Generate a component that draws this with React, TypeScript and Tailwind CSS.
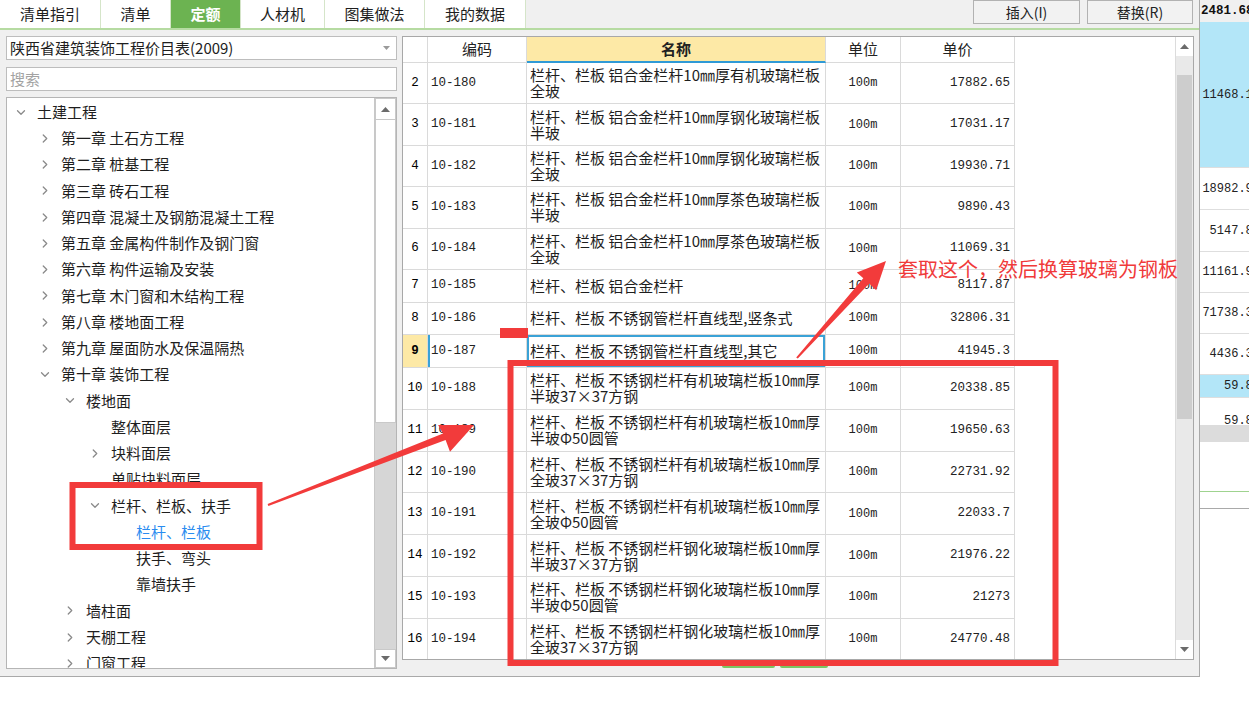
import { ChevronDown, ChevronRight } from 'lucide-react';

type TreeNode = { t: string; lvl: number; chev?: 'down' | 'right'; sel?: boolean };

const tree: TreeNode[] = [
  { t: '土建工程', lvl: 0, chev: 'down' },
  { t: '第一章 土石方工程', lvl: 1, chev: 'right' },
  { t: '第二章 桩基工程', lvl: 1, chev: 'right' },
  { t: '第三章 砖石工程', lvl: 1, chev: 'right' },
  { t: '第四章 混凝土及钢筋混凝土工程', lvl: 1, chev: 'right' },
  { t: '第五章 金属构件制作及钢门窗', lvl: 1, chev: 'right' },
  { t: '第六章 构件运输及安装', lvl: 1, chev: 'right' },
  { t: '第七章 木门窗和木结构工程', lvl: 1, chev: 'right' },
  { t: '第八章 楼地面工程', lvl: 1, chev: 'right' },
  { t: '第九章 屋面防水及保温隔热', lvl: 1, chev: 'right' },
  { t: '第十章 装饰工程', lvl: 1, chev: 'down' },
  { t: '楼地面', lvl: 2, chev: 'down' },
  { t: '整体面层', lvl: 3 },
  { t: '块料面层', lvl: 3, chev: 'right' },
  { t: '单贴块料面层', lvl: 3 },
  { t: '栏杆、栏板、扶手', lvl: 3, chev: 'down' },
  { t: '栏杆、栏板', lvl: 4, sel: true },
  { t: '扶手、弯头', lvl: 4 },
  { t: '靠墙扶手', lvl: 4 },
  { t: '墙柱面', lvl: 2, chev: 'right' },
  { t: '天棚工程', lvl: 2, chev: 'right' },
  { t: '门窗工程', lvl: 2, chev: 'right' },
];

const indent = ['pl-[7px]', 'pl-[31px]', 'pl-[56px]', 'pl-[81px]', 'pl-[106px]'];

// [no, code, line1, line2, price]
const rows: [number, string, string, string, string][] = [
  [2, '10-180', '栏杆、栏板 铝合金栏杆10㎜厚有机玻璃栏板', '全玻', '17882.65'],
  [3, '10-181', '栏杆、栏板 铝合金栏杆10㎜厚钢化玻璃栏板', '半玻', '17031.17'],
  [4, '10-182', '栏杆、栏板 铝合金栏杆10㎜厚钢化玻璃栏板', '全玻', '19930.71'],
  [5, '10-183', '栏杆、栏板 铝合金栏杆10㎜厚茶色玻璃栏板', '半玻', '9890.43'],
  [6, '10-184', '栏杆、栏板 铝合金栏杆10㎜厚茶色玻璃栏板', '全玻', '11069.31'],
  [7, '10-185', '栏杆、栏板 铝合金栏杆', '', '8117.87'],
  [8, '10-186', '栏杆、栏板 不锈钢管栏杆直线型,竖条式', '', '32806.31'],
  [9, '10-187', '栏杆、栏板 不锈钢管栏杆直线型,其它', '', '41945.3'],
  [10, '10-188', '栏杆、栏板 不锈钢栏杆有机玻璃栏板10㎜厚', '半玻37×37方钢', '20338.85'],
  [11, '10-189', '栏杆、栏板 不锈钢栏杆有机玻璃栏板10㎜厚', '半玻Φ50圆管', '19650.63'],
  [12, '10-190', '栏杆、栏板 不锈钢栏杆有机玻璃栏板10㎜厚', '全玻37×37方钢', '22731.92'],
  [13, '10-191', '栏杆、栏板 不锈钢栏杆有机玻璃栏板10㎜厚', '全玻Φ50圆管', '22033.7'],
  [14, '10-192', '栏杆、栏板 不锈钢栏杆钢化玻璃栏板10㎜厚', '半玻37×37方钢', '21976.22'],
  [15, '10-193', '栏杆、栏板 不锈钢栏杆钢化玻璃栏板10㎜厚', '半玻Φ50圆管', '21273'],
  [16, '10-194', '栏杆、栏板 不锈钢栏杆钢化玻璃栏板10㎜厚', '全玻37×37方钢', '24770.48'],
];

const tabs = [
  { t: '清单指引', w: 'w-[101px]' },
  { t: '清单', w: 'w-[70px]' },
  { t: '定额', w: 'w-[70px]', active: true },
  { t: '人材机', w: 'w-[84px]' },
  { t: '图集做法', w: 'w-[100px]' },
  { t: '我的数据', w: 'w-[101px]' },
];

const mono = "font-['Liberation_Mono','Noto_Sans_CJK_SC',monospace]";
const cell = 'border-r border-b border-[#dadada]';

function Tri({ up }: { up?: boolean }) {
  return (
    <svg width="9" height="5" viewBox="0 0 9 5">
      <path d={up ? 'M0 5 L4.5 0 L9 5 Z' : 'M0 0 L4.5 5 L9 0 Z'} fill="#6b6b6b" />
    </svg>
  );
}

function TreePanel() {
  return (
    <div className="mt-[6px] h-[572px] flex bg-white border border-[#b5b5b5] overflow-hidden">
      <div className="flex-1 pt-[1px] overflow-hidden">
        {tree.map((n, i) => (
          <div key={i} className={`flex items-center h-[26.25px] whitespace-nowrap ${indent[n.lvl]}`}>
            <span className="w-[14px] mr-[9px] flex items-center justify-center text-[#8a8a8a]">
              {n.chev === 'down' && <ChevronDown size={15} strokeWidth={2.2} />}
              {n.chev === 'right' && <ChevronRight size={15} strokeWidth={2.2} />}
            </span>
            <span className={`text-[15px] ${n.sel ? 'text-[#2a8cf0]' : 'text-[#1e1e1e]'}`}>{n.t}</span>
          </div>
        ))}
      </div>
      <div className="w-[22px] flex flex-col border-l border-[#c8c8c8]">
        <div className="h-[22px] bg-white border border-[#c9c9c9] flex items-center justify-center">
          <Tri up />
        </div>
        <div className="h-[303px] bg-white border-x border-b border-[#c9c9c9]" />
        <div className="flex-1 bg-[#d6d6d6]" />
        <div className="h-[19px] bg-white border border-[#c9c9c9] flex items-center justify-center">
          <Tri />
        </div>
      </div>
    </div>
  );
}

function Table() {
  return (
    <div className="h-[624px] flex bg-white border border-[#a8a8a8] overflow-hidden">
      <div className="flex-1 flex flex-col overflow-hidden">
        <div className="flex h-[26px] shrink-0 text-[15px] text-[#222]">
          <div className={`w-[25px] ${cell}`} />
          <div className={`w-[99px] ${cell} flex items-center justify-center`}>编码</div>
          <div className="w-[299px] border-r border-[#dadada] border-b-2 border-b-[#2f9ad6] bg-[#fde9a6] flex items-center justify-center font-bold">
            名称
          </div>
          <div className={`w-[75px] ${cell} flex items-center justify-center`}>单位</div>
          <div className={`w-[114px] ${cell} flex items-center justify-center`}>单价</div>
        </div>
        {rows.map(([no, code, l1, l2, price]) => {
          const sel = no === 9;
          const h = !l2 ? 'h-[32.7px]' : no < 10 ? 'h-[41.4px]' : 'h-[41.8px]';
          return (
            <div key={no} className={`flex shrink-0 ${h}`}>
              <div
                className={`w-[25px] ${cell} flex items-center justify-center ${mono} text-[12.5px] ${
                  sel ? 'bg-[#fde9a6] font-bold' : ''
                }`}
              >
                {no}
              </div>
              <div
                className={`w-[99px] ${cell} flex items-center pl-[3px] ${mono} text-[12.5px] text-[#222] ${
                  sel ? 'shadow-[inset_2px_0_0_#3aa2d6]' : ''
                }`}
              >
                {code}
              </div>
              <div
                className={`w-[299px] ${cell} flex flex-col justify-center pl-[3px] text-[15px] leading-[16px] text-[#1e1e1e] whitespace-nowrap overflow-hidden ${
                  sel ? 'shadow-[inset_0_0_0_2px_#3aa2d6]' : ''
                }`}
              >
                <span>{l1}</span>
                {l2 && <span>{l2}</span>}
              </div>
              <div className={`w-[75px] ${cell} flex items-center justify-center ${mono} text-[12px] text-[#222]`}>
                100m
              </div>
              <div className={`w-[114px] ${cell} flex items-center justify-end pr-[4px] ${mono} text-[12.5px] text-[#222]`}>
                {price}
              </div>
            </div>
          );
        })}
      </div>
      <div className="w-[18px] flex flex-col bg-[#e9e9e9] border-l border-[#dcdcdc]">
        <div className="h-[19px] bg-white flex items-center justify-center">
          <Tri up />
        </div>
        <div className="h-[19px]" />
        <div className="h-[344px] bg-[#cdcdcd] mx-[1px]" />
        <div className="flex-1" />
        <div className="h-[19px] bg-white flex items-center justify-center">
          <Tri />
        </div>
      </div>
    </div>
  );
}

function RightStrip() {
  const r = 'flex items-center border-b border-[#dedede] overflow-hidden whitespace-nowrap';
  const num = `w-[60px] shrink-0 text-right ${mono} text-[12px] text-[#222]`;
  return (
    <div className="w-[49px] flex flex-col overflow-hidden bg-white">
      <div className="h-[22px] bg-[#f0f0f0] flex items-center pl-[1px] whitespace-nowrap overflow-hidden">
        <span className={`shrink-0 ${mono} text-[12.5px] font-bold text-[#111]`}>2481.68</span>
      </div>
      <div className={`h-[146px] bg-[#b3e6f8] ${r}`}>
        <span className={num}>11468.16</span>
      </div>
      <div className={`h-[42px] ${r}`}>
        <span className={num}>18982.97</span>
      </div>
      <div className={`h-[42px] ${r}`}>
        <span className={num}>5147.85</span>
      </div>
      <div className={`h-[41px] ${r}`}>
        <span className={num}>11161.93</span>
      </div>
      <div className={`h-[41px] ${r}`}>
        <span className={num}>71738.31</span>
      </div>
      <div className={`h-[41px] ${r}`}>
        <span className={num}>4436.35</span>
      </div>
      <div className={`h-[23px] bg-[#b3e6f8] ${r}`}>
        <span className={num}>59.84</span>
      </div>
      <div className="h-[27px] overflow-hidden whitespace-nowrap pt-[14px]">
        <div className={num}>59.84</div>
      </div>
      <div className="h-[17px] bg-[#dcdcdc]" />
      <div className="h-[50px] border-b border-[#9fd38f]" />
      <div className="h-[17px] border-b border-[#a9a9a9]" />
    </div>
  );
}

export default function App() {
  return (
    <div className="w-[1249px] h-[709px] relative bg-white overflow-hidden font-['Noto_Sans_CJK_SC',sans-serif]">
      <div className="flex items-start">
        <div className="w-[1200px] h-[677px] shrink-0 bg-[#f0f0f0] border-r border-b border-[#a9a9a9] flex flex-col">
          {/* top bar */}
          <div className="h-[28px] flex shrink-0">
            <div className="flex bg-white">
              {tabs.map((t) => (
                <div
                  key={t.t}
                  className={`${t.w} h-full flex items-center justify-center text-[15px] border-r border-[#d5e5c9] ${
                    t.active ? 'bg-[#6cb351] text-white font-bold' : 'text-[#1e1e1e]'
                  }`}
                >
                  {t.t}
                </div>
              ))}
            </div>
            <div className="flex-1" />
            <div className="flex gap-[7px] pr-[6px]">
              <button className="w-[107px] h-[24px] bg-[#f2f2f2] border border-[#b2b2b2] text-[14px] text-[#222] flex items-center justify-center">
                插入(I)
              </button>
              <button className="w-[106px] h-[24px] bg-[#f2f2f2] border border-[#b2b2b2] text-[14px] text-[#222] flex items-center justify-center">
                替换(R)
              </button>
            </div>
          </div>
          <div className="h-[2px] bg-[#b6dba2] shrink-0" />

          {/* body */}
          <div className="flex-1 flex pt-[6px]">
            <div className="w-[402px] pl-[6px] pr-[5px] flex flex-col">
              <div className="h-[24px] bg-white border border-[#bdbdbd] flex items-center pl-[3px] pr-[6px]">
                <span className="flex-1 text-[15px] text-[#1e1e1e] whitespace-nowrap">陕西省建筑装饰工程价目表(2009)</span>
                <svg width="7" height="4" viewBox="0 0 7 4">
                  <path d="M0 0 L3.5 4 L7 0 Z" fill="#9a9a9a" />
                </svg>
              </div>
              <div className="mt-[7px] h-[24px] bg-white border border-[#bdbdbd] flex items-center pl-[3px]">
                <span className="text-[15px] text-[#a3a3a3]">搜索</span>
              </div>
              <TreePanel />
            </div>
            <div className="w-[792px] flex flex-col">
              <Table />
              <div className="flex h-[8px] pl-[320px] gap-[5px]">
                <div className="w-[53px] h-full bg-[#7cc462] rounded-b-[2px]" />
                <div className="w-[48px] h-full bg-[#7cc462] rounded-b-[2px]" />
              </div>
            </div>
          </div>
        </div>
        <RightStrip />
      </div>

      {/* annotations drawn over the screenshot */}
      <svg className="absolute inset-0 pointer-events-none" width="1249" height="709" viewBox="0 0 1249 709">
        <rect x="72.5" y="485" width="187" height="62" fill="none" stroke="#f23b3b" strokeWidth="6" />
        <rect x="510.5" y="363" width="545" height="300" fill="none" stroke="#f23b3b" strokeWidth="6" />
        <rect x="500" y="328" width="28" height="10" fill="#f23b3b" />
        <polygon
          points="268.4,506 445.6,439.9 450,451.7 474,425 438.1,424.9 443,433.4 267.6,504"
          fill="#f23b3b"
        />
        <polygon
          points="797.8,358.6 869.2,283.6 876.2,290.2 886,261 856.8,272.6 863.3,278.3 796.2,357.4"
          fill="#f23b3b"
        />
      </svg>
      <div className="absolute left-[898px] top-[256px] text-[20px] leading-[26px] text-[#f03a3a] whitespace-nowrap">
        套取这个，然后换算玻璃为钢板
      </div>
    </div>
  );
}
